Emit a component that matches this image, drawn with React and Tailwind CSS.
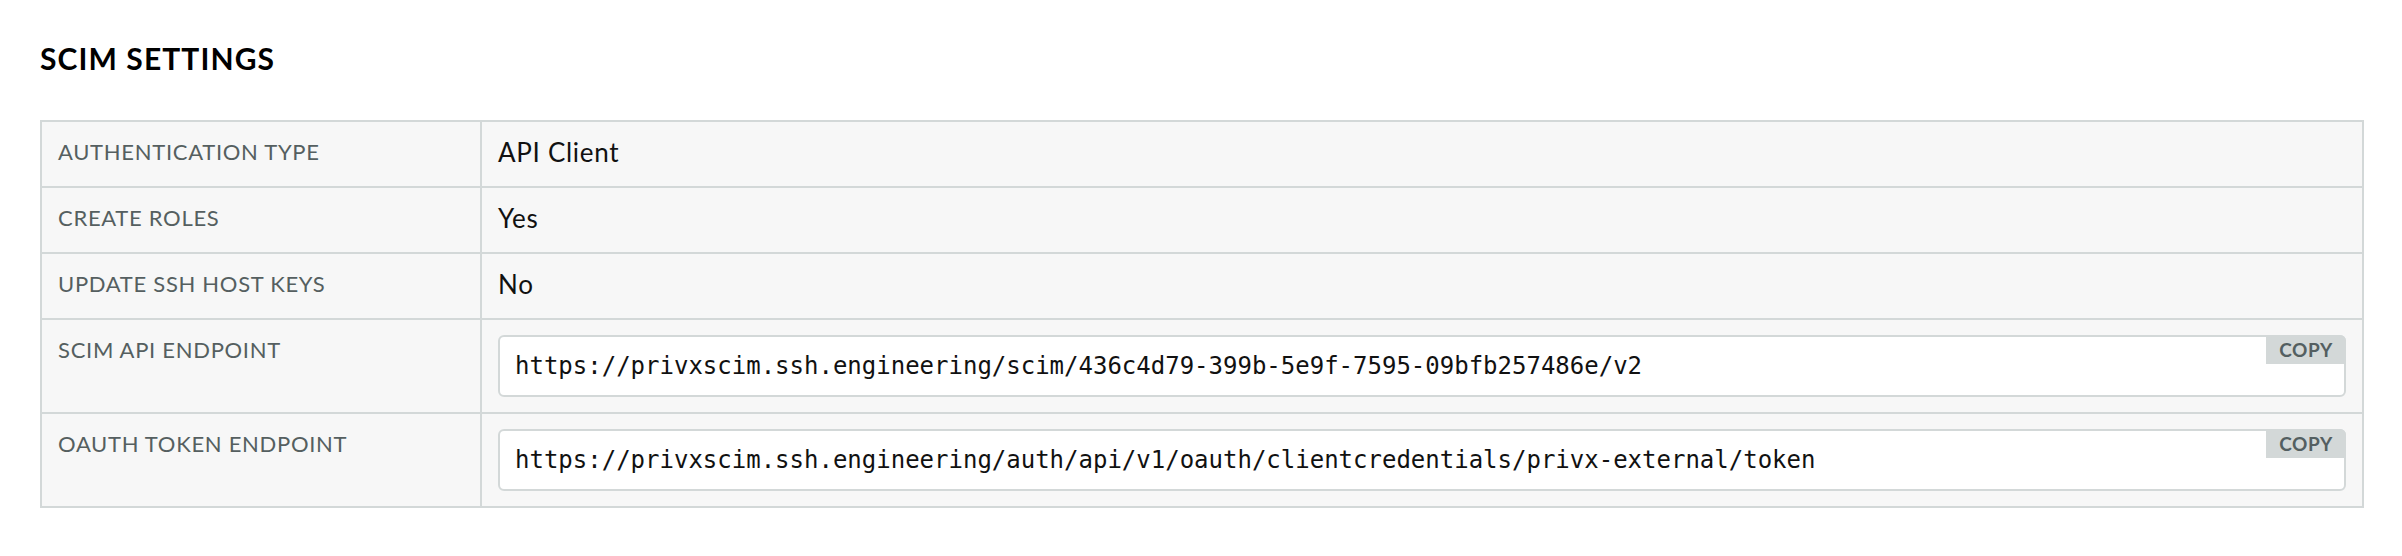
import React from "react";

const rows = [
  { label: "AUTHENTICATION TYPE", value: "API Client" },
  { label: "CREATE ROLES", value: "Yes" },
  { label: "UPDATE SSH HOST KEYS", value: "No" },
  {
    label: "SCIM API ENDPOINT",
    url: "https://privxscim.ssh.engineering/scim/436c4d79-399b-5e9f-7595-09bfb257486e/v2",
  },
  {
    label: "OAUTH TOKEN ENDPOINT",
    url: "https://privxscim.ssh.engineering/auth/api/v1/oauth/clientcredentials/privx-external/token",
  },
];

function UrlBox({ url }) {
  return (
    <div className="relative rounded-[6px] border-2 border-[#d3d8d8] bg-white px-[15px] py-[14px]">
      <div className="font-['DejaVu_Sans_Mono',monospace] text-[24px] leading-[30px] text-[#111] whitespace-nowrap">
        {url}
      </div>
      <div className="absolute -top-[2px] -right-[2px] flex h-[29px] items-center rounded-tr-[6px] bg-[#d3d8d8] px-[13px] font-['Lato',sans-serif] text-[19px] font-bold leading-none tracking-[0.6px] text-[#545f61]">
        COPY
      </div>
    </div>
  );
}

export default function App() {
  return (
    <div className="min-h-[556px] bg-white pl-[40px] pr-[38px] pt-[40px] font-['Lato',sans-serif]">
      <h1 className="text-[30px] font-bold leading-[36px] tracking-[1.1px] text-black">SCIM SETTINGS</h1>
      <div className="mt-[44px] border-2 border-[#d3d8d8] bg-[#f7f7f7]">
        {rows.map((r, i) => (
          <div
            key={r.label}
            className={`grid grid-cols-[438px_1fr] ${i > 0 ? "border-t-2 border-[#d3d8d8]" : ""}`}
          >
            <div className="px-[16px] pt-[16px] text-[22px] leading-[28px] tracking-[0.7px] text-[#555f60]">
              {r.label}
            </div>
            <div className="border-l-2 border-[#d3d8d8]">
              {r.url ? (
                <div className="px-[16px] py-[15px]">
                  <UrlBox url={r.url} />
                </div>
              ) : (
                <div className="h-[64px] px-[16px] pt-[14px] text-[26px] leading-[32px] tracking-[0.7px] text-[#111]">
                  {r.value}
                </div>
              )}
            </div>
          </div>
        ))}
      </div>
    </div>
  );
}
